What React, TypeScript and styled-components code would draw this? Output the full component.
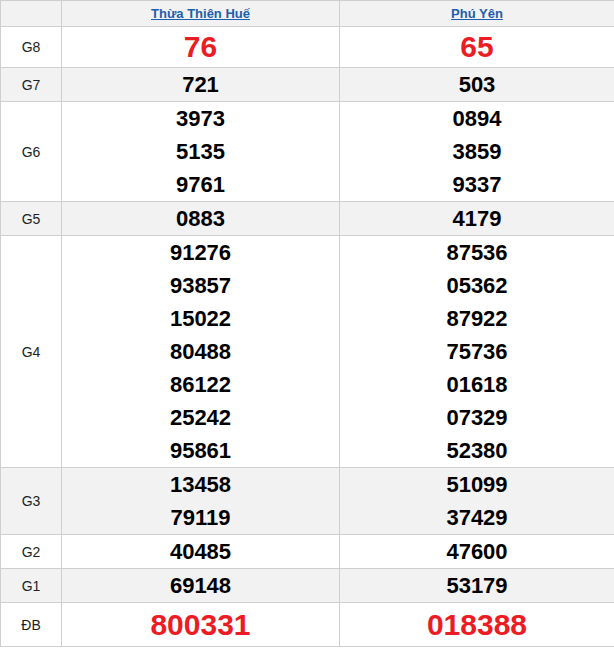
import React from "react";
import styled, { createGlobalStyle } from "styled-components";

const GlobalStyle = createGlobalStyle`
  html, body {
    margin: 0;
    padding: 0;
    background: #fff;
    overflow: hidden;
    font-family: Arial, "Liberation Sans", sans-serif;
  }
`;

type Prize = {
  label: string;
  left: string[];
  right: string[];
  big?: boolean;
  height?: number;
};

const prizes: Prize[] = [
  { label: "G8", left: ["76"], right: ["65"], big: true, height: 40 },
  { label: "G7", left: ["721"], right: ["503"] },
  { label: "G6", left: ["3973", "5135", "9761"], right: ["0894", "3859", "9337"] },
  { label: "G5", left: ["0883"], right: ["4179"] },
  {
    label: "G4",
    left: ["91276", "93857", "15022", "80488", "86122", "25242", "95861"],
    right: ["87536", "05362", "87922", "75736", "01618", "07329", "52380"],
  },
  { label: "G3", left: ["13458", "79119"], right: ["51099", "37429"] },
  { label: "G2", left: ["40485"], right: ["47600"] },
  { label: "G1", left: ["69148"], right: ["53179"] },
  { label: "ĐB", left: ["800331"], right: ["018388"], big: true, height: 43 },
];

const Board = styled.div`
  display: grid;
  grid-template-columns: 61px 278px 275px;
  width: 615px;
  border-top: 1px solid #cfcfcf;
  border-left: 1px solid #cfcfcf;
`;

const Cell = styled.div<{ $shade: boolean; $h?: number }>`
  box-sizing: border-box;
  display: flex;
  flex-direction: column;
  align-items: center;
  justify-content: center;
  border-right: 1px solid #cfcfcf;
  border-bottom: 1px solid #cfcfcf;
  background: ${(p) => (p.$shade ? "#f2f2f2" : "#fff")};
  ${(p) => (p.$h ? `height: ${p.$h + 1}px;` : "")}
`;

const Label = styled.span`
  font-size: 14px;
  color: #222;
`;

const Province = styled.a`
  font-size: 13px;
  font-weight: bold;
  color: #1c5fac;
  text-decoration: underline;
  line-height: 25px;
  cursor: pointer;
`;

const Num = styled.span<{ $big?: boolean }>`
  display: block;
  font-weight: bold;
  font-size: ${(p) => (p.$big ? "30px" : "22px")};
  line-height: ${(p) => (p.$big ? "40px" : "33px")};
  color: ${(p) => (p.$big ? "#ec1c24" : "#000")};
`;

const App: React.FC = () => {
  return (
    <>
      <GlobalStyle />
      <Board>
        <Cell $shade $h={25} />
        <Cell $shade $h={25}>
          <Province>Thừa Thiên Huế</Province>
        </Cell>
        <Cell $shade $h={25}>
          <Province>Phú Yên</Province>
        </Cell>
        {prizes.map((p, i) => {
          const shade = i % 2 === 1;
          return (
            <React.Fragment key={p.label}>
              <Cell $shade={shade} $h={p.height}>
                <Label>{p.label}</Label>
              </Cell>
              <Cell $shade={shade} $h={p.height}>
                {p.left.map((n, k) => (
                  <Num key={k} $big={p.big}>{n}</Num>
                ))}
              </Cell>
              <Cell $shade={shade} $h={p.height}>
                {p.right.map((n, k) => (
                  <Num key={k} $big={p.big}>{n}</Num>
                ))}
              </Cell>
            </React.Fragment>
          );
        })}
      </Board>
    </>
  );
};

export default App;
